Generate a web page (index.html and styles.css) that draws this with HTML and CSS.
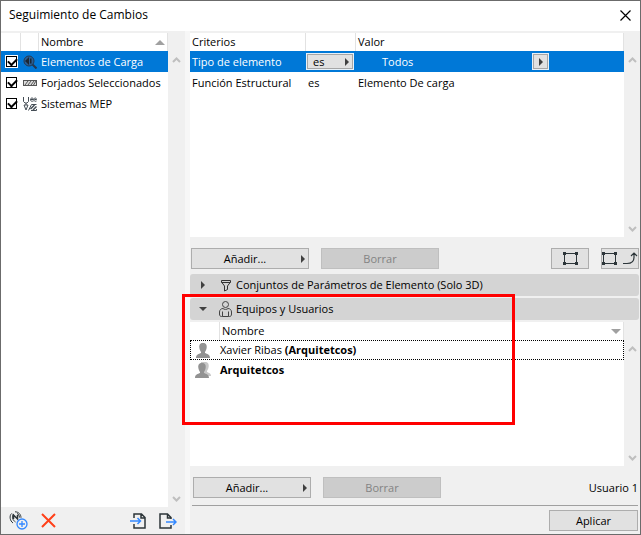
FILE: index.html
```
<!DOCTYPE html>
<html lang="es">
  <head>
    <meta charset="utf-8">
    <title>Seguimiento de Cambios</title>
    <link rel="stylesheet" href="styles.css">
  </head>
  <body>
    <!-- Title bar -->
    <header class="titlebar">
      <h1>Seguimiento de Cambios</h1>
      <button class="icon-button" aria-label="Cerrar">
        <svg width="11" height="11" viewBox="0 0 11 11"><path d="M.5 .5l10 10M10.5 .5l-10 10" stroke="#000" stroke-width="1.200" fill="none"/></svg>
      </button>
    </header>

    <div class="content">
      <!-- Rules -->
      <section class="sidebar">
        <div class="list-panel">
          <div class="list">
            <table class="rules">
              <thead>
                <tr>
                  <th class="col-check"></th>
                  <th class="col-icon"></th>
                  <th><div class="sortable"><span>Nombre</span><i class="sort-up"></i></div></th>
                </tr>
              </thead>
              <tbody>
                <tr class="selected">
                  <td><input type="checkbox" id="rule-1" checked></td>
                  <td>
                    <svg width="14" height="14" viewBox="0 0 14 14" fill="none" stroke="#25384f"><circle cx="6" cy="6" r="5" fill="#2a5f95"/><path d="M9.500 9.500l4 4" stroke-width="2"/><path d="M2 6l4-4v8zM7 3.500h1.500v5H7z" fill="#1b2733" stroke="none"/></svg>
                  </td>
                  <td><label for="rule-1">Elementos de Carga</label></td>
                </tr>
                <tr>
                  <td><input type="checkbox" id="rule-2" checked></td>
                  <td>
                    <svg width="14" height="14" viewBox="0 0 14 14" fill="none" stroke="#555"><rect x=".5" y="4.500" width="13" height="5" fill="#ddd"/><path d="M2 9l3-4M5 9l3-4M8 9l3-4M10.500 9l2.500-4"/></svg>
                  </td>
                  <td><label for="rule-2">Forjados Seleccionados</label></td>
                </tr>
                <tr>
                  <td><input type="checkbox" id="rule-3" checked></td>
                  <td>
                    <svg width="14" height="14" viewBox="0 0 14 14" fill="none" stroke="#444d55"><path d="M.5 0v4.500L2 6h2l1.500-1.500V0M3 6v2M1 8h4l-2 5z"/><path d="M7.500 2.500h3c0-2-3-2-3 0s1.500 2 3 1.500M11.500 2.500h2c0-2-2.500-2-2.500 0s1 2 2.500 1.500"/><path d="M5.500 13.500l3-6h5M8 13.500h5.500v-1.500"/><path d="M7.500 12l4-4M10 13l3.500-3.500" stroke-width="1.500"/></svg>
                  </td>
                  <td><label for="rule-3">Sistemas MEP</label></td>
                </tr>
              </tbody>
            </table>
          </div>
          <div class="scrollbar">
            <svg width="9" height="6" viewBox="0 0 9 6"><path d="M1 5l3.500-3.500L8 5"/></svg>
            <svg width="9" height="6" viewBox="0 0 9 6"><path d="M1 1l3.500 3.500L8 1"/></svg>
          </div>
        </div>
        <div class="sidebar-tools">
          <button class="icon-button" aria-label="Nueva regla">
            <svg width="19" height="19" viewBox="0 0 19 19" fill="none" stroke="#2c3539"><path d="M2.500 2.500C0 5 1 10 4 12M4.500 3C2.500 6 3.500 9 6.500 11"/><path d="M4.500 8V4l4 4V4" stroke-width="1.500"/><path d="M6 .8c3.500 0 6 2.500 6 6M8 2.500c1.500 .5 2.300 2 2.500 4"/><circle cx="13" cy="13" r="5" fill="#f0f0f0" stroke="#3388ff" stroke-width="1.300"/><path d="M13 10v6M10 13h6" stroke="#3388ff" stroke-width="1.300"/></svg>
          </button>
          <button class="icon-button" aria-label="Eliminar regla">
            <svg width="15" height="15" viewBox="0 0 15 15"><path d="M1 1l13 13M14 1L1 14" stroke="#ff4019" stroke-width="2" fill="none"/></svg>
          </button>
          <span class="spacer"></span>
          <button class="icon-button" aria-label="Importar">
            <svg width="16" height="16" viewBox="0 0 16 16" fill="none" stroke="#2c3539" stroke-width="1.500"><path d="M4 5V1h7.500L15 4.500V15H4v-4M11 1v4h4"/><path d="M0 8h10M7.500 5l3 3-3 3" stroke="#3388ff"/></svg>
          </button>
          <button class="icon-button" aria-label="Exportar">
            <svg width="18" height="16" viewBox="0 0 18 16" fill="none" stroke="#2c3539" stroke-width="1.500"><path d="M12 6V4.500L8.500 1H1v14h11v-3M8.500 1v4H12"/><path d="M7 9h10M14 6l3 3-3 3" stroke="#3388ff"/></svg>
          </button>
        </div>
      </section>

      <div class="splitter"></div>

      <section class="main">
        <!-- Criteria -->
        <div class="list-panel criteria-panel">
          <div class="list">
            <table class="criteria">
              <thead>
                <tr>
                  <th class="col-criterion">Criterios</th>
                  <th class="col-operator"></th>
                  <th>Valor</th>
                </tr>
              </thead>
              <tbody>
                <tr class="selected">
                  <td>Tipo de elemento</td>
                  <td class="cell-control"><button class="mini-button mini-wide"><span>es</span><i class="arrow-right"></i></button></td>
                  <td><div class="value"><span>Todos</span><button class="mini-button" aria-label="Elegir valor"><i class="arrow-right"></i></button></div></td>
                </tr>
                <tr>
                  <td>Función Estructural</td>
                  <td>es</td>
                  <td>Elemento De carga</td>
                </tr>
              </tbody>
            </table>
          </div>
          <div class="scrollbar">
            <svg width="9" height="6" viewBox="0 0 9 6"><path d="M1 5l3.500-3.500L8 5"/></svg>
            <svg width="9" height="6" viewBox="0 0 9 6"><path d="M1 1l3.500 3.500L8 1"/></svg>
          </div>
        </div>
        <div class="actions">
          <button class="button button-menu">Añadir...<i class="arrow-right"></i></button>
          <button class="button" disabled>Borrar</button>
          <span class="spacer"></span>
          <button class="button button-icon" aria-label="Seleccionar">
            <svg width="15" height="13" viewBox="0 0 15 13"><path d="M1.500 1.500h12v10h-12z" fill="none" stroke="#2c3539"/><path d="M0 0h3v3H0zM12 0h3v3h-3zM0 10h3v3H0zM12 10h3v3h-3z" fill="#2c3539"/></svg>
          </button>
          <button class="button button-icon" aria-label="Aplicar selección">
            <svg width="15" height="13" viewBox="0 0 15 13"><path d="M1.500 1.500h12v10h-12z" fill="none" stroke="#2c3539"/><path d="M0 0h3v3H0zM12 0h3v3h-3zM0 10h3v3H0zM12 10h3v3h-3z" fill="#2c3539"/></svg>
            <svg width="15" height="13" viewBox="0 0 15 13" fill="none" stroke="#2c3539"><path d="M0 11.500h4c4 0 7-2 7-6V1M8 4l3-3 3 3" stroke-width="1.200"/></svg>
          </button>
        </div>

        <!-- Sections -->
        <button class="section-header">
          <i class="arrow-right"></i>
          <svg width="18" height="18" viewBox="0 0 18 18" fill="none" stroke="#333"><path d="M5.500 4.500h9V6l-3 4v3.500l-3 1.500v-5l-3-4z"/><path d="M5.500 6.500h9"/></svg>
          <span>Conjuntos de Parámetros de Elemento (Solo 3D)</span>
        </button>
        <div class="users">
          <button class="section-header" aria-expanded="true">
            <i class="arrow-down"></i>
            <svg width="18" height="18" viewBox="0 0 18 18" fill="none" stroke="#444"><circle cx="9.500" cy="4.500" r="3"/><path d="M6.500 16.500H5.500c-1.500 0-2-1-2-2.500v-2c0-2 1.500-3.500 3.500-3.500 1 1.200 4 1.200 5 0 2 0 3.500 1.500 3.500 3.500v2c0 1.500-.5 2.500-2 2.500h-1v-5M6.500 11.500v5h6"/></svg>
            <span>Equipos y Usuarios</span>
          </button>
          <div class="list-panel">
            <div class="list">
              <table class="user-table">
                <thead>
                  <tr>
                    <th class="col-avatar"></th>
                    <th><div class="sortable"><span>Nombre</span><i class="sort-down"></i></div></th>
                  </tr>
                </thead>
                <tbody>
                  <tr class="focused">
                    <td><svg width="16" height="16" viewBox="0 0 16 16" fill="#929292"><path d="M8 1c3 0 4 2 3.700 4.500C11.500 8 10.500 9 10 10v1c2 1 5 1 5 5H1c0-4 3-4 5-5v-1C5.500 9 4.500 8 4.300 5.500 4 3 5 1 8 1z"/></svg></td>
                    <td>Xavier Ribas <b>(Arquitetcos)</b></td>
                  </tr>
                  <tr>
                    <td><svg width="16" height="16" viewBox="0 0 16 16"><path d="M10 0c3 0 4 2 3.700 4.500C13.500 7 12.500 8 12 9v1c2 1 4 1 4 4H6V0z" fill="#c8c8c8"/><path d="M7 1c3 0 4 2 3.700 4.500C10.500 8 9.500 9 9 10v1c2 1 5 1 5 5H0c0-4 3-4 5-5v-1C4.500 9 3.500 8 3.300 5.500 3 3 4 1 7 1z" fill="#929292"/></svg></td>
                    <td><b>Arquitetcos</b></td>
                  </tr>
                </tbody>
              </table>
            </div>
            <div class="scrollbar">
              <svg width="9" height="6" viewBox="0 0 9 6"><path d="M1 5l3.500-3.500L8 5"/></svg>
              <svg width="9" height="6" viewBox="0 0 9 6"><path d="M1 1l3.500 3.500L8 1"/></svg>
            </div>
          </div>
          <div class="highlight"></div>
        </div>
        <div class="actions user-actions">
          <button class="button button-menu">Añadir...<i class="arrow-right"></i></button>
          <button class="button" disabled>Borrar</button>
          <span class="spacer"></span>
          <span>Usuario 1</span>
        </div>
        <footer>
          <button class="button button-apply">Aplicar</button>
        </footer>
      </section>
    </div>
  </body>
</html>
```
FILE: styles.css
```
* {
  box-sizing: border-box;
}
body {
  margin: 0;
  height: 100vh;
  display: flex;
  flex-direction: column;
  border: 1px solid #6b6b6b;
  background-color: #f0f0f0;
  color: #000;
  font-family: "Open Sans", "Noto Sans", sans-serif;
  font-size: 11px;
  line-height: 16px;
}
svg {
  display: block;
  flex: none;
}
button {
  font: inherit;
  color: inherit;
  padding: 0;
}
.titlebar {
  height: 30px;
  flex: none;
  display: flex;
  align-items: center;
  justify-content: space-between;
  padding: 0 9px 2px 8px;
  background-color: #fff;
}
.titlebar h1 {
  margin: 0;
  font-size: 12px;
  font-weight: normal;
}
.icon-button {
  border: none;
  background: none;
}
.content {
  flex: 1;
  min-height: 0;
  display: flex;
}
.sidebar {
  width: 184px;
  flex: none;
  display: flex;
  flex-direction: column;
  padding-top: 2px;
}
.splitter {
  width: 5px;
  background-color: #f7f7f7;
}
.main {
  flex: 1;
  min-width: 0;
  display: flex;
  flex-direction: column;
  padding-top: 2px;
}

/* Lists */
.list-panel {
  flex: 1;
  min-height: 0;
  display: flex;
}
.criteria-panel {
  flex: none;
  height: 204px;
}
.list {
  flex: 1;
  min-width: 0;
  background-color: #fff;
}
.scrollbar {
  width: 16px;
  flex: none;
  display: flex;
  flex-direction: column;
  align-items: center;
  justify-content: space-between;
  padding: 24px 0 5px;
}
.sidebar .scrollbar {
  width: 17px;
}
.scrollbar path {
  fill: none;
  stroke: #bfbfbf;
  stroke-width: 2;
}
table {
  width: 100%;
  table-layout: fixed;
  border-spacing: 0;
}
th,
td {
  padding: 0 2px;
  text-align: left;
  font-weight: normal;
  white-space: nowrap;
}
th {
  height: 18px;
  border-right: 1px solid #e2e2e2;
}
td {
  height: 21px;
}
.selected {
  background-color: #0078d7;
  color: #fff;
}
.sortable {
  display: flex;
  align-items: center;
  justify-content: space-between;
}
.sort-up,
.sort-down {
  border: 5px solid transparent;
}
.sort-up {
  border-top: none;
  border-bottom-color: #a0a0a0;
}
.sort-down {
  border-bottom: none;
  border-top-color: #a0a0a0;
}
.col-check {
  width: 20px;
}
.col-icon {
  width: 18px;
}
.rules td:first-child {
  padding-left: 5px;
}
.rules input {
  appearance: none;
  display: block;
  width: 11px;
  height: 11px;
  margin: 0;
  border: 1px solid #000;
  background-color: #fff;
}
.rules input:checked::before {
  content: "";
  display: block;
  width: 7px;
  height: 4px;
  margin: 1px;
  border: solid #000;
  border-width: 0 0 2px 2px;
  transform: rotate(-45deg);
}
.selected input {
  outline: 1px solid #fff;
}
.col-criterion {
  width: 116px;
}
.col-operator {
  width: 50px;
}
.criteria .cell-control {
  padding: 0 2px 0 1px;
}
.value {
  display: flex;
  align-items: center;
  justify-content: space-between;
  padding: 0 74px 0 24px;
}
.mini-button {
  display: flex;
  align-items: center;
  justify-content: center;
  width: 15px;
  height: 15px;
  border: 1px solid #a6a6a6;
  outline: 1px solid #e8f1f8;
  background-color: #e1e1e1;
  color: #000;
}
.mini-wide {
  width: 46px;
  padding: 0 3px 0 5px;
  justify-content: space-between;
}
.arrow-right {
  border: 4px solid transparent;
  border-left-color: #404040;
  border-right: none;
}
.arrow-down {
  border: 4px solid transparent;
  border-top-color: #404040;
  border-bottom: none;
}

/* Buttons */
.actions {
  display: flex;
  align-items: center;
  gap: 12px;
  padding: 11px 1px 5px;
}
.button {
  position: relative;
  width: 118px;
  height: 21px;
  border: 1px solid #adadad;
  background-color: #e1e1e1;
}
.button:disabled {
  border-color: #bfbfbf;
  background-color: #ccc;
  color: #838383;
}
.button-menu {
  padding-right: 10px;
}
.button-menu .arrow-right {
  position: absolute;
  top: 6px;
  right: 3px;
}
.button-icon {
  width: 38px;
  display: flex;
  align-items: center;
  justify-content: center;
  gap: 6px;
}
.spacer {
  flex: 1;
}

/* Collapsible sections */
.section-header {
  width: calc(100% - 1px);
  height: 22px;
  flex: none;
  display: flex;
  align-items: center;
  border: none;
  border-radius: 3px;
  background-color: #d4d4d4;
}
.section-header i {
  margin-left: 11px;
  margin-right: 11px;
}
.section-header .arrow-down {
  margin-left: 9px;
  margin-right: 9px;
}
.section-header span {
  margin-left: 2px;
}
.users {
  position: relative;
  flex: 1;
  min-height: 0;
  display: flex;
  flex-direction: column;
  gap: 2px;
  margin-top: 2px;
}
.col-avatar {
  width: 30px;
}
.user-table td {
  height: 20px;
}
.user-table td:first-child {
  padding-left: 5px;
}
.user-table td:last-child {
  padding-left: 0;
}
.focused {
  outline: 1px dotted #000;
  outline-offset: -1px;
}
.highlight {
  position: absolute;
  left: -8px;
  top: -4px;
  width: 333px;
  height: 131px;
  border: 3px solid #f00;
  pointer-events: none;
}
.user-actions {
  padding: 11px 2px 7px 3px;
}
footer {
  display: flex;
  justify-content: flex-end;
  margin: 0 2px;
  padding: 4px 0 3px;
  border-top: 1px solid #a0a0a0;
}
.button-apply {
  width: 89px;
}

/* Toolbar below the rules */
.sidebar-tools {
  height: 27px;
  flex: none;
  display: flex;
  align-items: center;
  gap: 13px;
  padding: 0 8px;
}
```
